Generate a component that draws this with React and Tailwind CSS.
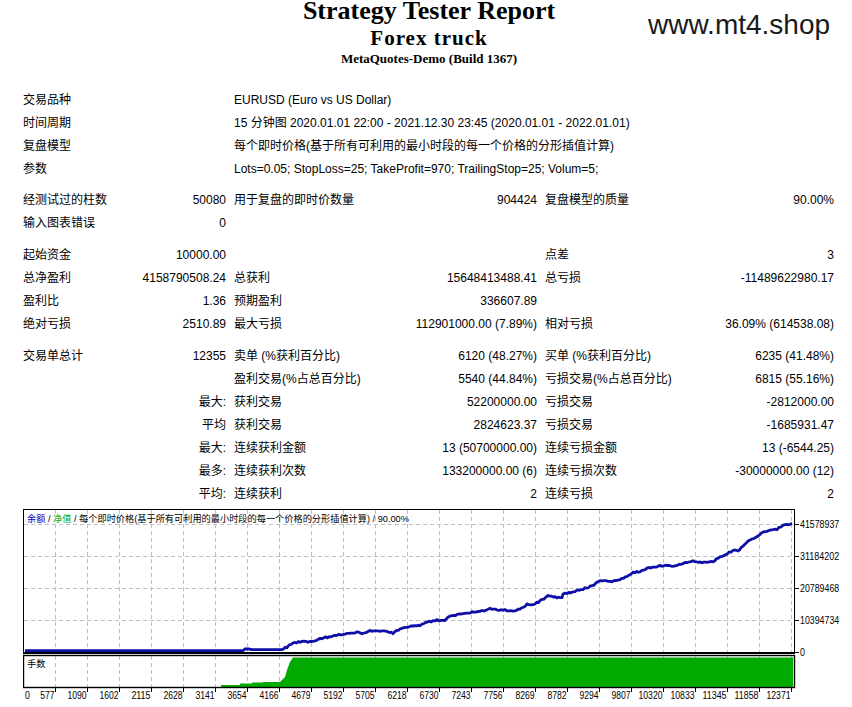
import React from "react";

const LINE_KEYS = [
  [2, 141.7], [220, 141.7], [222, 140], [226, 140], [229, 140.7], [259, 140.7],
  [264, 138], [270, 134], [279, 132.7], [289, 132.7], [299, 129.3], [310, 127],
  [324, 124.3], [334, 123.3], [339, 124.3], [347, 122], [359, 122], [370, 124],
  [377, 120], [390, 117], [397, 116.7], [404, 113.3], [414, 111], [422, 111.7],
  [427, 106.7], [440, 105], [447, 103.7], [459, 102], [467, 100], [480, 101],
  [492, 102], [497, 100], [504, 95.3], [512, 95], [519, 91], [525, 86.7],
  [534, 88.7], [539, 89.3], [540, 85.3], [550, 82.7], [560, 80], [569, 77],
  [577, 71.3], [587, 72.7], [597, 70], [604, 67.7], [610, 63.7], [619, 62],
  [624, 59.3], [637, 57], [650, 57], [660, 54.3], [670, 52], [679, 53.7],
  [690, 52.7], [697, 47.7], [704, 45], [710, 41], [715, 42], [720, 36.7],
  [727, 31], [735, 27.7], [740, 22.7], [754, 20], [760, 16.7], [769, 14.3],
];

function buildLine() {
  const pts = [];
  for (let i = 0; i < LINE_KEYS.length - 1; i++) {
    const [x0, y0] = LINE_KEYS[i];
    const [x1, y1] = LINE_KEYS[i + 1];
    const steps = Math.max(1, Math.round((x1 - x0) / 2));
    for (let s = 0; s < steps; s++) {
      const t = s / steps;
      const x = x0 + (x1 - x0) * t;
      let y = y0 + (y1 - y0) * t;
      if (x > 262) {
        const r = Math.sin(x * 12.9898) * 43758.5453;
        const f = r - Math.floor(r);
        y += (f - 0.5) * 1.4;
      }
      pts.push(`${x.toFixed(1)},${y.toFixed(1)}`);
    }
  }
  const last = LINE_KEYS[LINE_KEYS.length - 1];
  pts.push(`${last[0]},${last[1]}`);
  return pts.join(" ");
}

const X_LABELS = [
  "577", "1090", "1602", "2115", "2628", "3141", "3654", "4166", "4679", "5192",
  "5705", "6218", "6730", "7243", "7756", "8269", "8782", "9294", "9807",
  "10320", "10833", "11345", "11858", "12371",
];

const Y_LABELS = [
  ["41578937", 15],
  ["31184202", 47],
  ["20789468", 79],
  ["10394734", 111],
  ["0", 143],
];

function Chart() {
  const vlines = Array.from({ length: 24 }, (_, k) => 32 + 32 * k);
  const hlines = [15, 47, 79, 111];
  const green =
    "198,178 198,176 217,176 217,174.5 229,174.5 229,173.5 240,173.5 240,173 257,173 258,172 262,168 264,161 267,153 270,148.5 770,148.5 770,178";
  return (
    <svg width="829" height="198" viewBox="0 0 829 198" className="block" fontFamily="'Liberation Sans', Arial, sans-serif">
      <rect x="0" y="0" width="772" height="144" fill="#ffffff" />
      {hlines.map((y) => (
        <line key={"h" + y} x1="1" x2="771" y1={y + 0.5} y2={y + 0.5} stroke="#c0c0c0" strokeWidth="1" strokeDasharray="4 3" />
      ))}
      {vlines.map((x) => (
        <line key={"v" + x} x1={x + 0.5} x2={x + 0.5} y1="1" y2="143" stroke="#c0c0c0" strokeWidth="1" strokeDasharray="4 3" />
      ))}
      <polyline points={buildLine()} fill="none" stroke="#0f0fa8" strokeWidth="2.8" strokeLinejoin="miter" />
      <rect x="0.5" y="0.5" width="771" height="143" fill="none" stroke="#000" strokeWidth="1" />
      <line x1="0" x2="772" y1="144.5" y2="144.5" stroke="#000" strokeWidth="1" />
      {Y_LABELS.map(([t, y]) => (
        <g key={t}>
          <line x1="772" x2="776" y1={y + 0.5} y2={y + 0.5} stroke="#000" strokeWidth="1" />
          <text x="777" y={y + 4} fontSize="10" fill="#000" textLength={t.length * 4.9} lengthAdjust="spacingAndGlyphs">
            {t}
          </text>
        </g>
      ))}
      <text x="4" y="12.5" fontSize="9.2" fill="#000" fontFamily="'Liberation Sans', 'Noto Sans CJK SC', sans-serif">
        <tspan fill="#0000cc">余额</tspan>
        <tspan> / </tspan>
        <tspan fill="#00aa00">净值</tspan>
        <tspan> / 每个即时价格(基于所有可利用的最小时段的每一个价格的分形插值计算) / 90.00%</tspan>
      </text>

      {/* volume panel */}
      <rect x="0.5" y="146.5" width="771" height="32" fill="#ffffff" />
      {vlines.map((x) => (
        <line key={"b" + x} x1={x + 0.5} x2={x + 0.5} y1="147" y2="178" stroke="#c0c0c0" strokeWidth="1" strokeDasharray="4 3" />
      ))}
      <polygon points={green} fill="#00aa00" />
      <rect x="0.5" y="146.5" width="771" height="32" fill="none" stroke="#000" strokeWidth="1.4" />
      <text x="4" y="158" fontSize="9.2" fill="#000" fontFamily="'Liberation Sans', 'Noto Sans CJK SC', sans-serif">
        手数
      </text>
      {vlines.map((x) => (
        <line key={"t" + x} x1={x + 0.5} x2={x + 0.5} y1="179" y2="183" stroke="#000" strokeWidth="1" />
      ))}
      <text x="2" y="190.3" fontSize="10" fill="#000" textLength="4.9" lengthAdjust="spacingAndGlyphs">
        0
      </text>
      {X_LABELS.map((t, k) => (
        <text
          key={t}
          x={32 + 32 * k - t.length * 4.9}
          y="190.3"
          fontSize="10"
          fill="#000"
          textLength={t.length * 4.9 - 0.5}
          lengthAdjust="spacingAndGlyphs"
        >
          {t}
        </text>
      ))}
    </svg>
  );
}

const GRID = "grid grid-cols-[95px_100px_140px_155px_145px_136px] gap-x-2 h-[23px] leading-[23px] whitespace-nowrap";

function R({ a = "", b = "", c = "", d = "", e = "", f = "" }) {
  return (
    <div className={GRID}>
      <div>{a}</div>
      <div className="text-right">{b}</div>
      <div>{c}</div>
      <div className="text-right">{d}</div>
      <div>{e}</div>
      <div className="text-right">{f}</div>
    </div>
  );
}

function Wide({ a, v }) {
  return (
    <div className={GRID}>
      <div className="col-span-2">{a}</div>
      <div className="col-span-4">{v}</div>
    </div>
  );
}

export default function App() {
  return (
    <div className="w-[852px] h-[707px] overflow-hidden bg-white text-black">
      <div className="relative h-[89px] pl-[6px] pt-[1px]">
        <div className="text-center font-['Liberation_Serif',serif] font-bold text-black">
          <div className="h-[20px] text-[26px] leading-[20px]">Strategy Tester Report</div>
          <div className="pt-[2px] text-[21px] leading-[30px] tracking-[1px]">Forex truck</div>
          <div className="text-[13px] leading-[12px]">MetaQuotes-Demo (Build 1367)</div>
        </div>
        <div className="absolute left-[648px] top-[11px] font-['Liberation_Sans',Arial,sans-serif] text-[28px] leading-[28px] text-[#1a1a1a]">
          www.mt4.shop
        </div>
      </div>

      <div className="pl-[23px] font-['Liberation_Sans','Noto_Sans_CJK_SC',sans-serif] text-[12px]">
        <Wide a="交易品种" v="EURUSD (Euro vs US Dollar)" />
        <Wide a="时间周期" v="15 分钟图 2020.01.01 22:00 - 2021.12.30 23:45 (2020.01.01 - 2022.01.01)" />
        <Wide a="复盘模型" v="每个即时价格(基于所有可利用的最小时段的每一个价格的分形插值计算)" />
        <Wide a="参数" v="Lots=0.05; StopLoss=25; TakeProfit=970; TrailingStop=25; Volum=5;" />
        <div className="h-[8px]" />
        <R a="经测试过的柱数" b="50080" c="用于复盘的即时价数量" d="904424" e="复盘模型的质量" f="90.00%" />
        <R a="输入图表错误" b="0" />
        <div className="h-[9px]" />
        <R a="起始资金" b="10000.00" e="点差" f="3" />
        <R a="总净盈利" b="4158790508.24" c="总获利" d="15648413488.41" e="总亏损" f="-11489622980.17" />
        <R a="盈利比" b="1.36" c="预期盈利" d="336607.89" />
        <R a="绝对亏损" b="2510.89" c="最大亏损" d="112901000.00 (7.89%)" e="相对亏损" f="36.09% (614538.08)" />
        <div className="h-[9px]" />
        <R a="交易单总计" b="12355" c="卖单 (%获利百分比)" d="6120 (48.27%)" e="买单 (%获利百分比)" f="6235 (41.48%)" />
        <R c="盈利交易(%占总百分比)" d="5540 (44.84%)" e="亏损交易(%占总百分比)" f="6815 (55.16%)" />
        <R b="最大:" c="获利交易" d="52200000.00" e="亏损交易" f="-2812000.00" />
        <R b="平均" c="获利交易" d="2824623.37" e="亏损交易" f="-1685931.47" />
        <R b="最大:" c="连续获利金额" d="13 (50700000.00)" e="连续亏损金额" f="13 (-6544.25)" />
        <R b="最多:" c="连续获利次数" d="133200000.00 (6)" e="连续亏损次数" f="-30000000.00 (12)" />
        <R b="平均:" c="连续获利" d="2" e="连续亏损" f="2" />
      </div>

      <div className="mt-[3px] pl-[23px]">
        <Chart />
      </div>
    </div>
  );
}
